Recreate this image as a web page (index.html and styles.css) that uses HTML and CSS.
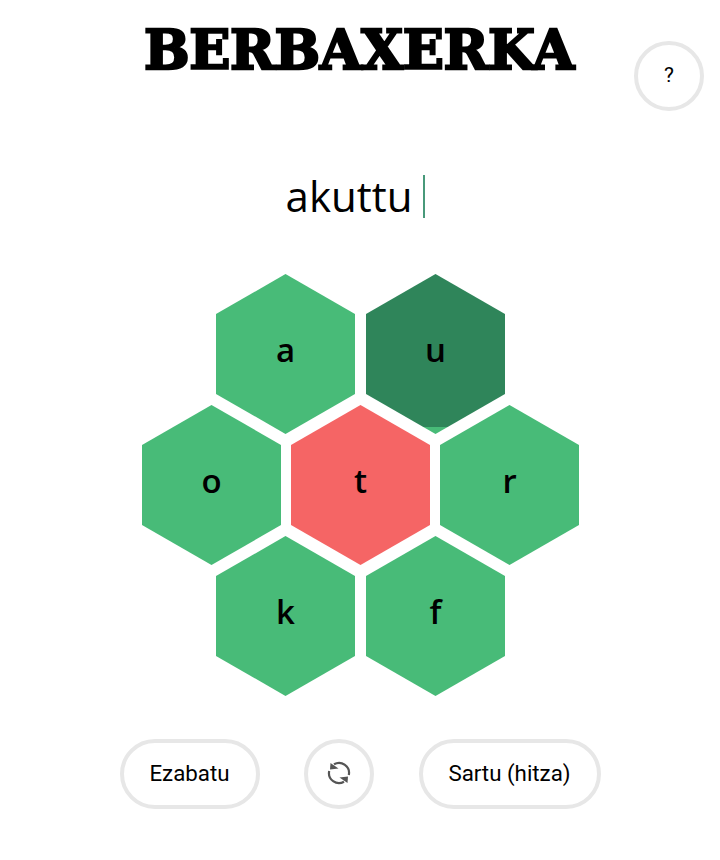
FILE: index.html
```html
<!DOCTYPE html>
<html lang="eu">
<head>
<meta charset="utf-8">
<title>Berbaxerka</title>
<link rel="stylesheet" href="styles.css">
</head>
<body>
<header class="top">
  <h1 class="logo">BERBAXERKA</h1>
  <button class="btn round help">?</button>
</header>
<main class="game">
  <div class="word"><span>akuttu</span><i class="caret"></i></div>
  <div class="hive">
    <div class="row">
      <div class="hex">a</div>
      <div class="hex pressed">u</div>
    </div>
    <div class="row middle">
      <div class="hex">o</div>
      <div class="hex center">t</div>
      <div class="hex">r</div>
    </div>
    <div class="row">
      <div class="hex">k</div>
      <div class="hex">f</div>
    </div>
  </div>
  <div class="controls">
    <button class="btn pill del">Ezabatu</button>
    <button class="btn round" aria-label="Nahastu">
      <svg width="26" height="26" viewBox="0 0 26 26" fill="none">
        <path d="M8 4.3A10 10 0 0 1 22.8 15" stroke="#555" stroke-width="2.2"/>
        <path d="M18 21.7A10 10 0 0 1 3.2 11" stroke="#555" stroke-width="2.2"/>
        <path d="M4.5 3L12.5 8.5L4 9.5Z" fill="#555"/>
        <path d="M21.5 23L13.5 17.5L22 16.5Z" fill="#555"/>
      </svg>
    </button>
    <button class="btn pill enter">Sartu (hitza)</button>
  </div>
</main>
</body>
</html>
```

FILE: styles.css
```css
* { box-sizing: border-box; }
html, body { margin: 0; height: 100%; background: #fff; }
body { width: 720px; height: 860px; overflow: hidden; color: #000; font-family: Roboto, sans-serif; }

.top { position: relative; height: 130px; padding-top: 22px; text-align: center; }
.logo {
  margin: 0;
  padding-right: 2px;
  font: 900 54px/56px "DejaVu Serif", serif;
  letter-spacing: -0.4px;
  -webkit-text-stroke: 2.4px #000;
  white-space: nowrap;
}
.help { position: absolute; top: 41px; left: 634px; }

.btn {
  height: 70px;
  padding: 0 0 2px;
  border: 4px solid #e7e7e7;
  border-radius: 35px;
  background: #fff;
  color: #000;
  font: 400 22.3px Roboto, sans-serif;
  display: inline-flex;
  align-items: center;
  justify-content: center;
}
.round { width: 70px; }
.help { font-size: 21px; }
.del { width: 140px; }
.enter { width: 182px; }

.game { display: flex; flex-direction: column; align-items: center; }
.word {
  height: 44px;
  margin-top: 44px;
  margin-right: 9px;
  display: flex;
  align-items: center;
  font: 400 42px/44px "Open Sans", sans-serif;
}
.caret { width: 2px; height: 43px; margin-left: 11px; background: #48997a; }

.hive { margin: 56px 0 0 1px; display: flex; flex-direction: column; }
.row { display: flex; justify-content: center; gap: 11px; margin-top: -29px; }
.row:first-child { margin-top: 0; }
.middle { gap: 10px; }
.hex {
  width: 139px;
  height: 160px;
  padding-bottom: 10px;
  display: flex;
  align-items: center;
  justify-content: center;
  clip-path: polygon(50% 0, 100% 25%, 100% 75%, 50% 100%, 0 75%, 0 25%);
  background: #48bb78;
  font: 600 33px/1 "Open Sans", sans-serif;
}
.center { background: #f56565; }
.pressed { background: linear-gradient(#2f855a 0 153px, #48bb78 153px); }

.controls { margin-top: 43px; display: flex; align-items: center; gap: 44.5px; }
```
